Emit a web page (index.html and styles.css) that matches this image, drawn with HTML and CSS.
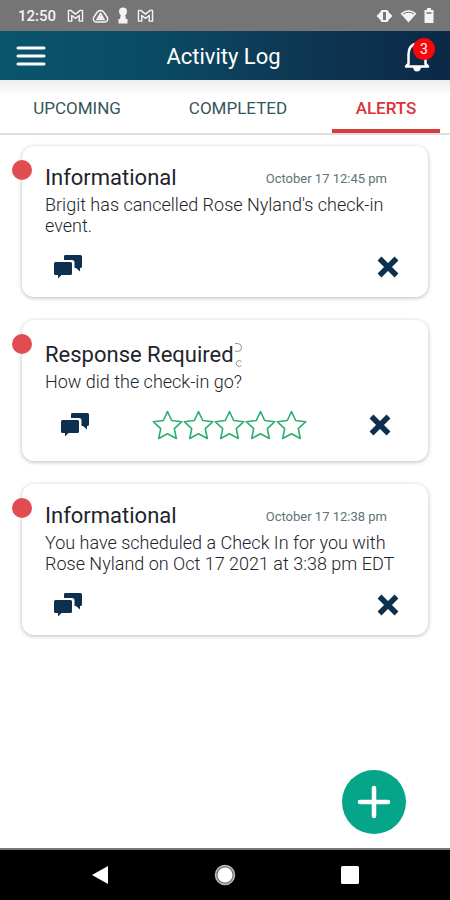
FILE: index.html
```html
<!DOCTYPE html>
<html lang="en">
<head>
<meta charset="utf-8">
<meta name="viewport" content="width=device-width, initial-scale=1">
<title>Activity Log</title>
<link rel="stylesheet" href="styles.css">
</head>
<body>
<svg class="sprite" aria-hidden="true">
  <symbol id="chat" viewBox="0 0 30 26">
    <path fill="currentColor" d="M12 1h15.500q1.500 0 1.500 1.500v10q0 1.500-1.500 1.500h-.5v3.500l-4-3.500h-1.500V8.500q0-2.500-2.500-2.500h-8V2.500Q11 1 12 1z"/>
    <path fill="currentColor" d="M2.500 8h15q1.500 0 1.500 1.500v10q0 1.500-1.500 1.500H8.500L5 24.500V21H2.500Q1 21 1 19.500v-10Q1 8 2.500 8z"/>
  </symbol>
  <symbol id="cross" viewBox="0 0 22 22">
    <path d="M2.500 2.500l17 17M19.500 2.500l-17 17" fill="none" stroke="currentColor" stroke-width="5.500"/>
  </symbol>
  <symbol id="star" viewBox="0 0 31 30">
    <path d="M15.500 1.500l4.200 9 10.100 1.200-7.500 7 2 9.800-8.800-4.800-8.800 4.800 2-9.800-7.500-7 10.100-1.200z" fill="none" stroke="currentColor" stroke-width="1.600" stroke-linejoin="round"/>
  </symbol>
  <symbol id="mail" viewBox="0 0 18 16">
    <path d="M1.500 14V2.500H4l5 4 5-4h2.500V14H13V8l-4 3-4-3v6z" fill="none" stroke="currentColor" stroke-width="1.500" stroke-linejoin="round"/>
  </symbol>
</svg>

<div class="status">
  <div class="status-group">
    <span class="clock">12:50</span>
    <svg width="17" height="15"><use href="#mail"/></svg>
    <svg width="17" height="16" viewBox="0 0 17 16" fill="none" stroke="currentColor" stroke-width="1.500"><path d="M5 4.500a4 4 0 0 1 7 0l3.500 5q1 4-3 4.500h-8q-4-.5-3-4.500z"/><path d="M8.500 5.500l3.500 6H5z"/><circle cx="8.500" cy="9.500" r="1"/></svg>
    <svg width="12" height="17" viewBox="0 0 12 17" fill="currentColor"><circle cx="6" cy="4.500" r="4"/><path d="M4 7h4l1 5h1.500v4.500h-9V12H3z"/></svg>
    <svg width="17" height="15"><use href="#mail"/></svg>
  </div>
  <div class="status-group status-right">
    <svg width="17" height="14" viewBox="0 0 17 14" fill="currentColor"><path fill-rule="evenodd" d="M5.500 1h6l1.500 2.500L16.500 7 13 10.500 11.500 13h-6L4 10.500.5 7 4 3.500zM7 3v8h3V3z"/></svg>
    <svg width="17" height="14" viewBox="0 0 17 14" fill="currentColor"><path d="M.5 4.500q8-7 16 0l-8 9z"/><path d="M3 5q5.500-3.500 11 0" fill="none" stroke="#757575"/></svg>
    <svg width="10" height="15" viewBox="0 0 10 15" fill="currentColor"><path d="M3 0h4v2h2q.5 0 .5.500v12q0 .5-.5.500H1q-.5 0-.5-.5v-12Q.5 2 1 2h2z"/><path d="M2.500 5h5" stroke="#757575" stroke-width="1.500"/></svg>
  </div>
</div>

<header class="appbar">
  <button class="icon-button" aria-label="Menu">
    <svg width="30" height="22" viewBox="0 0 30 22" stroke="currentColor" stroke-width="3" stroke-linecap="round"><path d="M2 3h26M2 11h26M2 19h26"/></svg>
  </button>
  <h1>Activity Log</h1>
  <button class="icon-button bell" aria-label="Notifications">
    <svg width="28" height="34" viewBox="0 0 28 34"><path d="M5.500 25V15q0-9 8.500-10.500Q22.500 6 22.500 15v10l2.500 2.500H3z" fill="none" stroke="currentColor" stroke-width="2.500" stroke-linejoin="round"/><path d="M10 28h8q-.5 4.500-4 4.500T10 28z" fill="currentColor"/></svg>
    <span class="badge">3</span>
  </button>
</header>

<nav class="tabs">
  <a href="#upcoming">UPCOMING</a>
  <a href="#completed">COMPLETED</a>
  <a href="#alerts" class="active" aria-current="page">ALERTS</a>
</nav>

<main class="feed">
  <article class="card">
    <span class="dot"></span>
    <div class="card-head"><h2>Informational</h2><time>October 17 12:45 pm</time></div>
    <p>Brigit has cancelled Rose Nyland's check-in event.</p>
    <div class="actions">
      <button class="icon-button" aria-label="Message"><svg width="30" height="26"><use href="#chat"/></svg></button>
      <button class="icon-button" aria-label="Dismiss"><svg width="22" height="22"><use href="#cross"/></svg></button>
    </div>
  </article>

  <article class="card rating-card">
    <span class="dot"></span>
    <div class="card-head">
      <h2>Response Required</h2>
      <svg class="marks" width="8" height="26" viewBox="0 0 8 26" fill="none" stroke="#8b9299"><path d="M1 1.500h2.500a3.500 3.500 0 0 1 0 8L1 9M7.500 19.500a3 3 0 1 0 0 4"/></svg>
    </div>
    <p>How did the check-in go?</p>
    <div class="actions">
      <button class="icon-button" aria-label="Message"><svg width="30" height="26"><use href="#chat"/></svg></button>
      <div class="stars" role="group" aria-label="Rating">
        <button class="icon-button" aria-label="1 star"><svg width="31" height="30"><use href="#star"/></svg></button>
        <button class="icon-button" aria-label="2 stars"><svg width="31" height="30"><use href="#star"/></svg></button>
        <button class="icon-button" aria-label="3 stars"><svg width="31" height="30"><use href="#star"/></svg></button>
        <button class="icon-button" aria-label="4 stars"><svg width="31" height="30"><use href="#star"/></svg></button>
        <button class="icon-button" aria-label="5 stars"><svg width="31" height="30"><use href="#star"/></svg></button>
      </div>
      <button class="icon-button" aria-label="Dismiss"><svg width="22" height="22"><use href="#cross"/></svg></button>
    </div>
  </article>

  <article class="card">
    <span class="dot"></span>
    <div class="card-head"><h2>Informational</h2><time>October 17 12:38 pm</time></div>
    <p>You have scheduled a Check In for you with Rose Nyland on Oct 17 2021 at 3:38 pm EDT</p>
    <div class="actions">
      <button class="icon-button" aria-label="Message"><svg width="30" height="26"><use href="#chat"/></svg></button>
      <button class="icon-button" aria-label="Dismiss"><svg width="22" height="22"><use href="#cross"/></svg></button>
    </div>
  </article>
</main>

<div class="fab-row">
  <button class="fab" aria-label="Add">
    <svg width="34" height="34" viewBox="0 0 34 34" stroke="currentColor" stroke-width="4.500" stroke-linecap="round"><path d="M17 3v28M3 17h28"/></svg>
  </button>
</div>

<footer class="navbar">
  <button class="icon-button" aria-label="Back"><svg width="18" height="20" viewBox="0 0 18 20" fill="currentColor"><path d="M1 10L17 1v18z"/></svg></button>
  <button class="icon-button" aria-label="Home"><svg width="22" height="22" viewBox="0 0 22 22"><circle cx="11" cy="11" r="9.500" fill="#777" stroke="#bbb" stroke-width="1.500"/><circle cx="11" cy="11" r="7.500" fill="currentColor"/></svg></button>
  <button class="icon-button" aria-label="Recent apps"><svg width="18" height="18" viewBox="0 0 18 18" fill="currentColor"><rect width="18" height="18" rx="1.500"/></svg></button>
</footer>
</body>
</html>
```
FILE: styles.css
```css
* {
  box-sizing: border-box;
}

body {
  margin: 0;
  min-height: 100vh;
  display: flex;
  flex-direction: column;
  background: #fff;
  color: #22242c;
  font-family: Roboto, "Liberation Sans", sans-serif;
}

h1, h2, p {
  margin: 0;
  font-weight: 400;
}

svg {
  display: block;
}

.sprite {
  position: absolute;
  width: 0;
  height: 0;
}

.icon-button {
  padding: 0;
  border: 0;
  background: none;
  color: inherit;
  font: inherit;
}

.status {
  display: flex;
  justify-content: space-between;
  align-items: center;
  height: 31px;
  padding: 0 16px 0 18px;
  background: #757575;
  color: #f4f4f4;
}

.status-group {
  display: flex;
  align-items: center;
  gap: 8px;
}

.clock {
  margin-right: 3px;
  font-size: 15px;
  font-weight: 500;
}

.status-right {
  gap: 7px;
}

.appbar {
  display: grid;
  grid-template-columns: 1fr auto 1fr;
  align-items: center;
  height: 49px;
  padding: 0 19px 0 16px;
  background: linear-gradient(90deg, #09556c 0%, #0b4a64 35%, #0d3854 65%, #0c2847 100%);
  color: #fff;
}

.appbar > .icon-button {
  justify-self: start;
}

.appbar h1 {
  padding-top: 2px;
  font-size: 22px;
  line-height: 28px;
}

.appbar > .bell {
  position: relative;
  justify-self: end;
}

.badge {
  position: absolute;
  top: -1px;
  right: -4px;
  width: 22px;
  height: 22px;
  border-radius: 50%;
  background: #f80808;
  font-size: 14px;
  line-height: 22px;
  text-align: center;
}

.tabs {
  display: grid;
  grid-template-columns: 1fr 1fr 108px;
  gap: 27px;
  height: 55px;
  padding: 0 10px;
  border-bottom: 2px solid #dedede;
  background: linear-gradient(#ececec, #fff 16px);
}

.tabs a {
  display: flex;
  align-items: center;
  justify-content: center;
  padding-top: 6px;
  border-bottom: 4px solid transparent;
  color: #35555a;
  font-size: 17px;
  text-decoration: none;
}

.tabs .active {
  border-bottom-color: #dc3a3e;
  color: #dc3238;
  font-weight: 500;
}

.feed {
  display: flex;
  flex-direction: column;
  gap: 23px;
  padding: 11px 22px 0;
}

.card {
  position: relative;
  padding: 18px 23px 15px;
  border-radius: 12px;
  background: #fff;
  box-shadow: 0 1px 4px rgba(0, 0, 0, 0.28);
}

.dot {
  position: absolute;
  top: 14px;
  left: -10px;
  width: 20px;
  height: 20px;
  border-radius: 50%;
  background: #e14c50;
}

.card-head {
  display: flex;
  align-items: center;
  height: 28px;
}

.card-head h2 {
  font-size: 22px;
  line-height: 28px;
}

.card-head time {
  margin: 0 18px 0 auto;
  color: #5c7476;
  font-size: 13px;
}

.card p {
  margin-top: 2px;
  color: #22242c;
  font-size: 18px;
  font-weight: 300;
  line-height: 21px;
}

.actions {
  display: flex;
  justify-content: space-between;
  align-items: center;
  height: 30px;
  margin-top: 16px;
  padding: 0 6px 0 8px;
  color: #0c304e;
}

.rating-card {
  padding-top: 21px;
  padding-bottom: 21px;
}

.rating-card .actions {
  margin-top: 18px;
  padding: 0 14px 0 15px;
}

.stars {
  display: flex;
  color: #2cae72;
}

.fab-row {
  display: flex;
  justify-content: flex-end;
  margin-top: auto;
  padding: 16px 44px 14px;
}

.fab {
  display: grid;
  place-items: center;
  width: 64px;
  height: 64px;
  padding: 0;
  border: 0;
  border-radius: 50%;
  background: #05a58a;
  color: #fff;
}

.navbar {
  display: grid;
  grid-template-columns: repeat(3, 125px);
  justify-content: center;
  justify-items: center;
  align-items: center;
  height: 52px;
  border-top: 2px solid #777;
  background: #000;
  color: #fff;
}
```
